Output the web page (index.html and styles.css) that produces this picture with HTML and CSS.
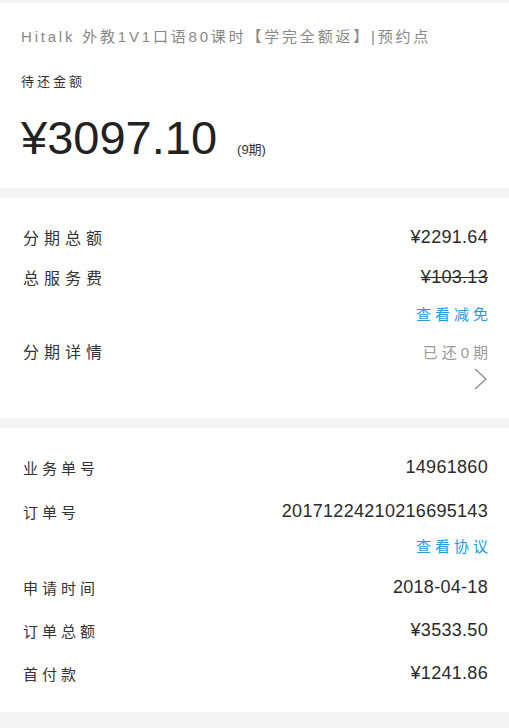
FILE: index.html
```html
<!DOCTYPE html>
<html lang="zh-CN">
<head>
  <meta charset="UTF-8" />
  <meta name="viewport" content="width=device-width, initial-scale=1.0"/>
  <title>分期详情</title>
  <link rel="stylesheet" href="styles.css">
</head>
<body>

  <div class="section summary">
    <div class="title">Hitalk 外教1V1口语80课时【学完全额返】|预约点</div>
    <div class="due-label">待还金额</div>
    <div class="due">
      <span class="due-amount">¥3097.10</span>
      <span class="due-terms">(9期)</span>
    </div>
  </div>

  <div class="section plan">
    <div class="row">
      <span class="label">分期总额</span>
      <span class="value">¥2291.64</span>
    </div>
    <div class="row">
      <span class="label">总服务费</span>
      <span class="value struck">¥103.13</span>
    </div>
    <div class="link-row">
      <a class="link">查看减免</a>
    </div>
    <div class="detail-row">
      <span class="label">分期详情</span>
      <div class="detail-side">
        <span class="paid">已还0期</span>
        <svg class="chevron" width="13" height="22" viewBox="0 0 13 22">
          <polyline points="1,1 12,11 1,21" fill="none" stroke="#8a8a8a" stroke-width="1.3"/>
        </svg>
      </div>
    </div>
  </div>

  <div class="section order">
    <div class="row">
      <span class="label">业务单号</span>
      <span class="value">14961860</span>
    </div>
    <div class="row">
      <span class="label">订单号</span>
      <span class="value">20171224210216695143</span>
    </div>
    <div class="link-row">
      <a class="link">查看协议</a>
    </div>
    <div class="row">
      <span class="label">申请时间</span>
      <span class="value">2018-04-18</span>
    </div>
    <div class="row">
      <span class="label">订单总额</span>
      <span class="value">¥3533.50</span>
    </div>
    <div class="row">
      <span class="label">首付款</span>
      <span class="value">¥1241.86</span>
    </div>
  </div>

</body>
</html>
```

FILE: styles.css
```css
* { box-sizing: border-box; }

body {
  margin: 0;
  background: #f4f4f4;
  font-family: "Liberation Sans", "Noto Sans CJK SC", sans-serif;
  color: #333;
}

.section {
  background: #fff;
  padding: 0 21px 0 23px;
}

/* top block */
.summary {
  margin-top: 3px;
  height: 185px;
  padding: 24px 21px 0;
}

.title {
  font-size: 15px;
  line-height: 20px;
  letter-spacing: 2.8px;
  color: #888;
  white-space: nowrap;
}

.due-label {
  margin-top: 26px;
  font-size: 13px;
  line-height: 18px;
  letter-spacing: 3px;
  color: #333;
}

.due {
  margin-top: 19px;
  display: flex;
  align-items: baseline;
  height: 56px;
}

.due-amount {
  font-size: 47px;
  line-height: 56px;
  color: #222;
}

.due-terms {
  margin-left: 20px;
  font-size: 13px;
}

/* rows */
.row {
  display: flex;
  justify-content: space-between;
  align-items: center;
}

.label {
  letter-spacing: 5px;
  color: #333;
}

.value {
  font-size: 18px;
  letter-spacing: 0.3px;
  color: #2a2a2a;
}

.struck { text-decoration: line-through; }

.link-row {
  display: flex;
  justify-content: flex-end;
  align-items: center;
}

.link {
  font-size: 15px;
  letter-spacing: 4px;
  margin-right: -4px;
  color: #1d9ce0;
}

/* plan block */
.plan {
  margin-top: 10px;
  padding-top: 19px;
  padding-bottom: 28px;
}

.plan .row { height: 40px; }
.plan .label { font-size: 16px; }
.plan .link-row { height: 32px; }

.detail-row {
  display: flex;
  justify-content: space-between;
  align-items: flex-start;
  padding-top: 12px;
}

.detail-row .label { line-height: 24px; }

.detail-side {
  display: flex;
  flex-direction: column;
  align-items: flex-end;
}

.paid {
  font-size: 15px;
  line-height: 24px;
  letter-spacing: 4px;
  margin-right: -4px;
  color: #999;
}

.chevron {
  margin-top: 3px;
  margin-right: 1px;
}

/* order block */
.order {
  margin-top: 10px;
  padding-top: 17px;
  padding-bottom: 17px;
}

.order .row { height: 43px; }
.order .row:first-child,
.order .row:nth-child(2) { height: 44px; }
.order .label { font-size: 15px; letter-spacing: 4px; }
.order .link-row { height: 24px; margin-bottom: 9px; }
```
